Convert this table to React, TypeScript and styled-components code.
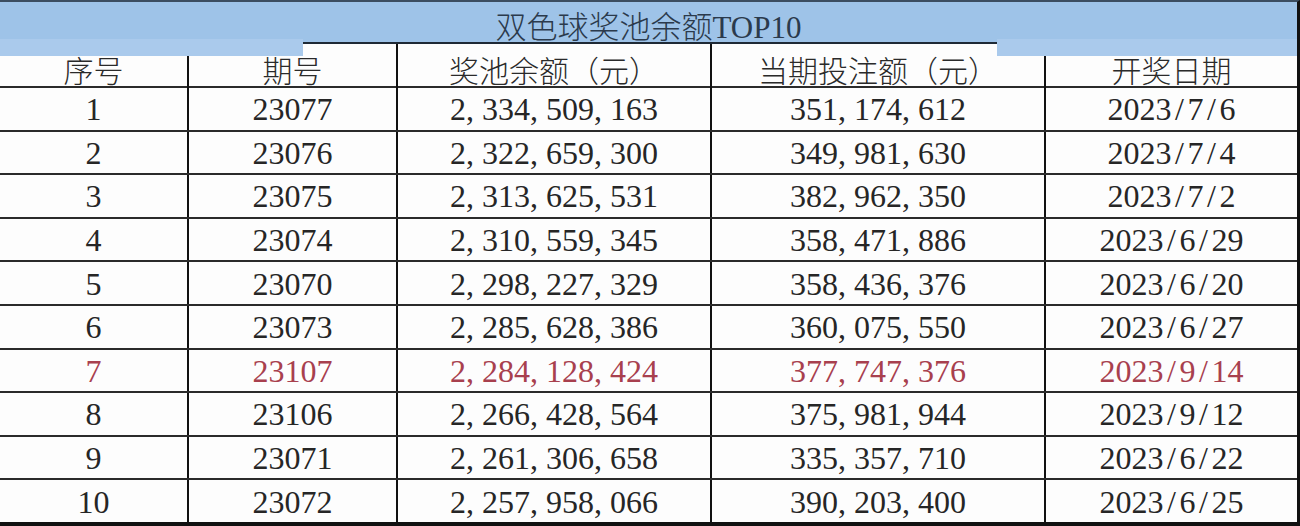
import styled, { createGlobalStyle } from 'styled-components';

const GlobalStyle = createGlobalStyle`
  html, body {
    margin: 0;
    padding: 0;
    background: #ffffff;
    overflow: hidden;
  }
`;

interface IRow {
  no: string;
  issue: string;
  pool: string;
  bets: string;
  date: string;
  mark?: boolean;
}

const rows: IRow[] = [
  { no: '1', issue: '23077', pool: '2, 334, 509, 163', bets: '351, 174, 612', date: '2023/7/6' },
  { no: '2', issue: '23076', pool: '2, 322, 659, 300', bets: '349, 981, 630', date: '2023/7/4' },
  { no: '3', issue: '23075', pool: '2, 313, 625, 531', bets: '382, 962, 350', date: '2023/7/2' },
  { no: '4', issue: '23074', pool: '2, 310, 559, 345', bets: '358, 471, 886', date: '2023/6/29' },
  { no: '5', issue: '23070', pool: '2, 298, 227, 329', bets: '358, 436, 376', date: '2023/6/20' },
  { no: '6', issue: '23073', pool: '2, 285, 628, 386', bets: '360, 075, 550', date: '2023/6/27' },
  { no: '7', issue: '23107', pool: '2, 284, 128, 424', bets: '377, 747, 376', date: '2023/9/14', mark: true },
  { no: '8', issue: '23106', pool: '2, 266, 428, 564', bets: '375, 981, 944', date: '2023/9/12' },
  { no: '9', issue: '23071', pool: '2, 261, 306, 658', bets: '335, 357, 710', date: '2023/6/22' },
  { no: '10', issue: '23072', pool: '2, 257, 958, 066', bets: '390, 203, 400', date: '2023/6/25' },
];

const headers = ['序号', '期号', '奖池余额（元）', '当期投注额（元）', '开奖日期'];

const Dates: React.FC<{ value: string }> = ({ value }) => {
  const parts = value.split('/');
  return (
    <>
      {parts.map((p, i) => (
        <span key={i}>
          {i > 0 && <Slash>/</Slash>}
          {p}
        </span>
      ))}
    </>
  );
};

const App: React.FC = () => {
  return (
    <>
      <GlobalStyle />
      <Sheet>
        <TitleBar>双色球奖池余额TOP10</TitleBar>
        <HeaderRow>
          {headers.map((h) => (
            <HeadCell key={h}>{h}</HeadCell>
          ))}
        </HeaderRow>
        <Body>
          {rows.map((r) => (
            <Row key={r.no} $mark={r.mark}>
              <Cell>{r.no}</Cell>
              <Cell>{r.issue}</Cell>
              <Cell>{r.pool}</Cell>
              <Cell>{r.bets}</Cell>
              <Cell>
                <Dates value={r.date} />
              </Cell>
            </Row>
          ))}
        </Body>
        <Strip $left={0} $width={303} />
        <Strip $left={997} $width={300} />
      </Sheet>
    </>
  );
};

const Sheet = styled.div`
  position: relative;
  box-sizing: border-box;
  width: 1300px;
  height: 526px;
  display: flex;
  flex-direction: column;
  background: #fdfdfd;
  border-top: 2px solid #3b4d60;
  border-right: 3px solid #111;
  border-bottom: 4px solid #111;
  font-family: 'Liberation Serif', 'Noto Sans CJK SC', serif;
  color: #222;
`;

const TitleBar = styled.div`
  height: 40px;
  flex: none;
  display: flex;
  align-items: center;
  justify-content: center;
  padding-top: 4px;
  box-sizing: border-box;
  background: #9ec3e8;
  color: #2b3a4c;
  font-size: 31px;
  font-weight: 300;
`;

const Strip = styled.div<{ $left: number; $width: number }>`
  position: absolute;
  top: 37px;
  left: ${(p) => p.$left}px;
  width: ${(p) => p.$width}px;
  height: 17px;
  background: #aacaec;
`;

const grid = `
  display: grid;
  grid-template-columns: 189px 209px 314px 334px 1fr;
`;

const HeaderRow = styled.div`
  ${grid}
  height: 46px;
  flex: none;
  box-sizing: border-box;
  border-top: 2px solid #1f2a36;
  border-bottom: 2px solid #2b2b2b;
`;

const HeadCell = styled.div`
  display: flex;
  align-items: center;
  justify-content: center;
  padding-top: 3px;
  box-sizing: border-box;
  border-right: 2px solid #111;
  font-size: 30px;
  font-weight: 300;
  color: #2a2a2a;

  &:last-child {
    border-right: none;
  }
`;

const Body = styled.div`
  flex: 1;
  display: flex;
  flex-direction: column;
`;

const Row = styled.div<{ $mark?: boolean }>`
  ${grid}
  flex: 1;
  box-sizing: border-box;
  color: ${(p) => (p.$mark ? '#a8404e' : '#262626')};

  & + & {
    border-top: 2px solid #2b2b2b;
  }
`;

const Cell = styled.div`
  display: flex;
  align-items: center;
  justify-content: center;
  padding-top: 2px;
  box-sizing: border-box;
  border-right: 2px solid #111;
  font-size: 32px;
  white-space: pre;

  &:last-child {
    border-right: none;
  }
`;

const Slash = styled.span`
  display: inline-block;
  margin: 0 3.5px;
`;

export default App;
